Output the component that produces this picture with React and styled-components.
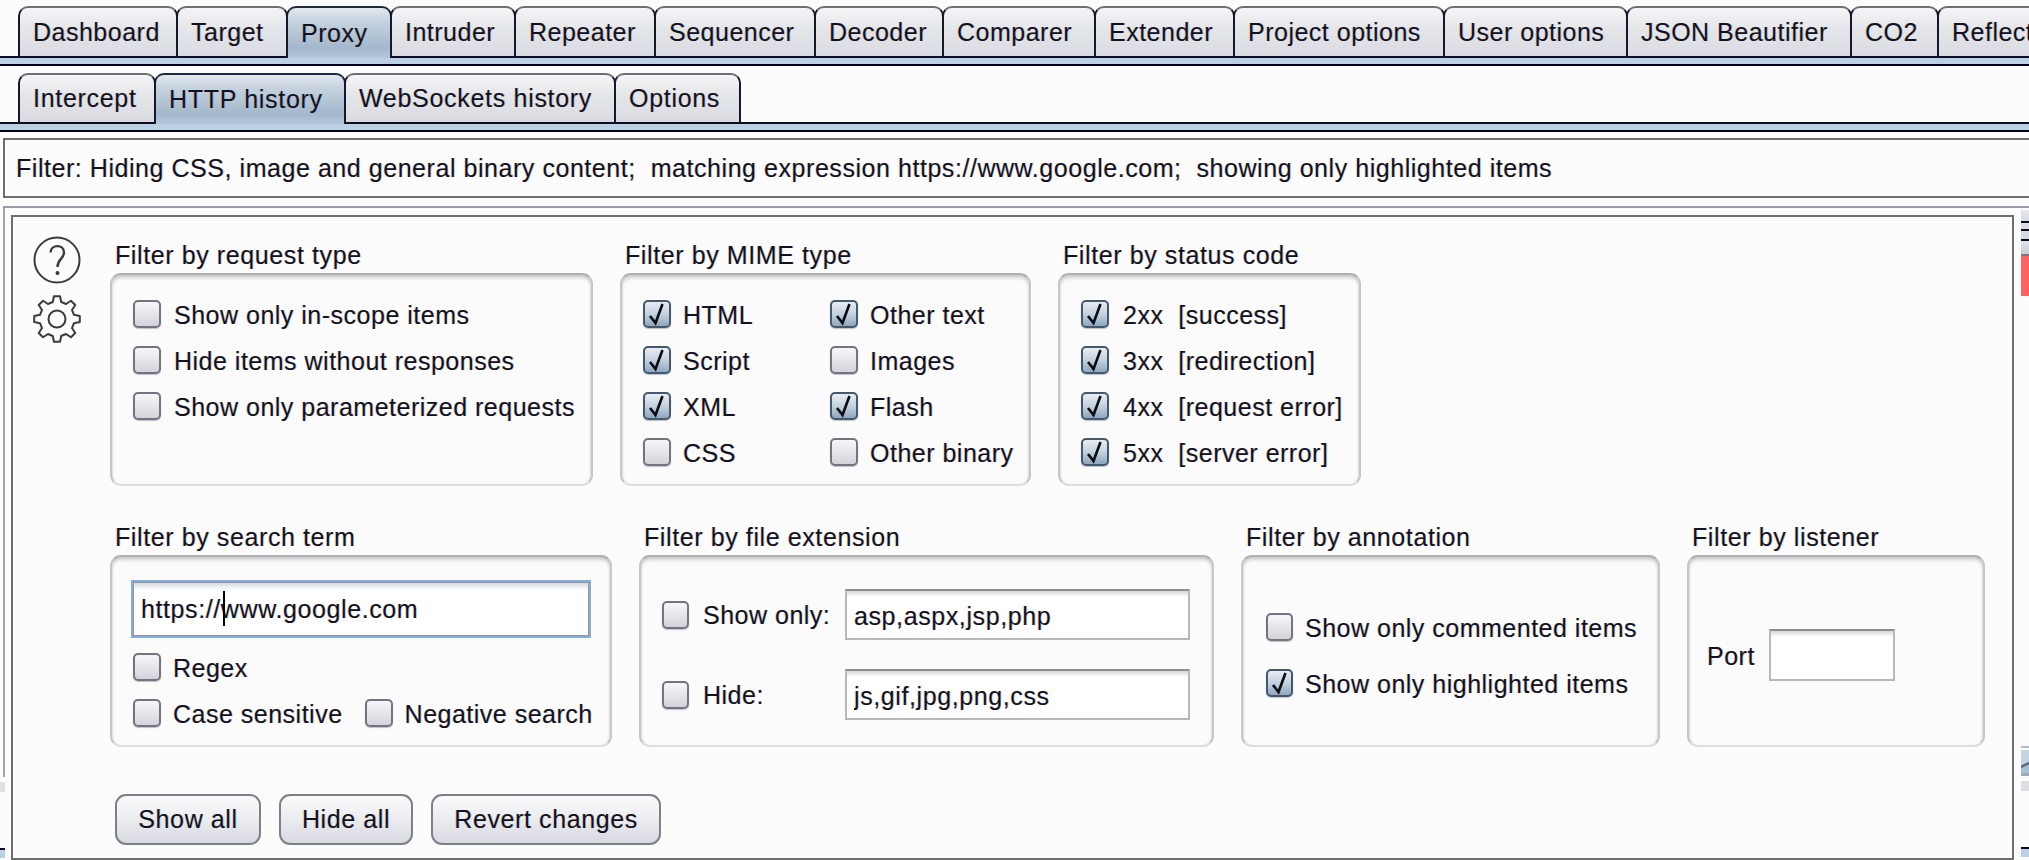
import React from "react";
import styled, { createGlobalStyle, css } from "styled-components";

const Global = createGlobalStyle`
  html, body { margin: 0; padding: 0; background: #fcfcfc; overflow: hidden; }
  body { width: 2029px; height: 860px; font-family: "Liberation Sans", Arial, sans-serif; color: #14101f; }
  * { box-sizing: border-box; }
`;

const fringe = css`
  text-shadow: -0.7px 0 rgba(255, 150, 0, 0.3), 0.7px 0 rgba(0, 130, 255, 0.3);
`;

const Page = styled.div`
  width: 2029px;
  height: 860px;
  overflow: hidden;
  display: flex;
  flex-direction: column;
  font-size: 25px;
  letter-spacing: 0.5px;
  ${fringe}
`;

const TabRow = styled.div`
  display: flex;
  margin-top: ${(p) => p.$top}px;
  height: ${(p) => p.$height}px;
  padding-left: 18px;
  background: linear-gradient(#0b0b24, #0b0b24) bottom / 100% 2px no-repeat;
  letter-spacing: ${(p) => p.$spacing}px;
`;

const Tab = styled.div`
  flex: none;
  width: ${(p) => p.$width}px;
  margin-right: -2px;
  padding-left: 13px;
  display: flex;
  align-items: center;
  border: 2px solid #14182c;
  border-top-color: ${(p) => (p.$active ? "#1c2a3e" : "#6e6e76")};
  border-bottom: ${(p) => (p.$active ? "none" : "2px solid #0b0b24")};
  border-radius: 10px 10px 0 0;
  background: ${(p) =>
    p.$active
      ? "linear-gradient(#e4e9ee 0, #c6d3df 25%, #a3b8cc 80%, #b4c8dc 100%)"
      : "linear-gradient(#f5f5f7 0, #e6e7ea 40%, #d9dbe1 100%)"};
`;

const Band = styled.div`
  height: 8px;
  background: #bcd0e4;
  border-bottom: 2px solid #00001e;
`;

const FilterBar = styled.div`
  margin: 6px 0 8px 3px;
  height: 60px;
  padding-left: 11px;
  display: flex;
  align-items: center;
  white-space: pre;
  letter-spacing: 0.55px;
  border: 2px solid #6e6e6e;
  border-right: none;
`;

const TopLine = styled.div`
  height: 2px;
  margin-left: 3px;
  background: #9a9ca8;
`;

const PanelRow = styled.div`
  flex: 1;
  display: flex;
  min-height: 0;
`;

const LeftGutter = styled.div`
  flex: none;
  width: 11px;
  display: flex;
  flex-direction: column;
`;

const OuterLine = styled.div`
  height: 569px;
  width: 2px;
  margin-left: 3px;
  background: #a4a6b0;
`;

const Strip = styled.div`
  flex: none;
  width: 8px;
  margin-left: 7px;
  display: flex;
  flex-direction: column;
`;

const StripPart = styled.div`
  flex: none;
  height: ${(p) => p.$h}px;
  width: ${(p) => p.$w || "100%"};
  background: ${(p) => p.$c || "transparent"};
`;

const Inner = styled.div`
  flex: none;
  width: 2003px;
  margin-top: 7px;
  border: 2px solid #6e6e6e;
  display: flex;
`;

const IconCol = styled.div`
  flex: none;
  width: 97px;
  padding: 19px 0 0 20px;
  display: flex;
  flex-direction: column;
  gap: 11px;
`;

const Content = styled.div`
  flex: 1;
  display: flex;
  flex-direction: column;
  padding-top: 28px;
`;

const GroupRow = styled.div`
  display: flex;
  gap: 27px;
  margin-bottom: 41px;
`;

const Group = styled.div`
  flex: none;
  width: ${(p) => p.$width}px;
`;

const Title = styled.div`
  height: 28px;
  line-height: 20px;
  padding-left: 5px;
  white-space: pre;
  letter-spacing: 0.6px;
`;

const Box = styled.div`
  height: ${(p) => p.$height}px;
  padding: ${(p) => p.$pad};
  border: 2px solid #c6c6c8;
  border-top-color: #b0b0b2;
  border-bottom-color: #dedee0;
  border-radius: 11px;
  background: #fbfbfb;
  box-shadow: inset 0 4px 4px -2px #bcbcbe, inset 2px 0 2px -1px #e4e4e6, inset -2px 0 2px -1px #e4e4e6;
`;

const Stack = styled.div`
  display: flex;
  flex-direction: column;
  gap: ${(p) => p.$gap || 18}px;
  margin-left: ${(p) => p.$indent || 0}px;
`;

const MimeGrid = styled.div`
  display: grid;
  grid-template-columns: 187px 1fr;
  row-gap: 18px;
`;

const CheckRow = styled.div`
  display: flex;
  align-items: center;
  height: 28px;
  gap: ${(p) => p.$gap || 13}px;
  white-space: pre;
`;

const CheckText = styled.span`
  padding-top: 2px;
`;

const CheckBox = styled.div`
  flex: none;
  width: ${(p) => p.$size || 28}px;
  height: 28px;
  border: 2px solid ${(p) => (p.$on ? "#46586c" : "#727480")};
  border-radius: 5px;
  display: flex;
  align-items: center;
  justify-content: center;
  background: ${(p) =>
    p.$on
      ? "linear-gradient(#e8edf2 0, #c4d2df 50%, #8ea8c0 100%)"
      : "linear-gradient(#f6f6f8 0, #e8e8ec 45%, #d2d4da 100%)"};
  box-shadow: 0 1px 1px rgba(90, 90, 100, 0.35);
`;

const Field = styled.input`
  display: block;
  width: ${(p) => p.$width}px;
  height: ${(p) => p.$height}px;
  padding: 3px 0 0 7px;
  border: 2px solid #b8b8b8;
  border-top-color: #8c8c8c;
  background: linear-gradient(#d8d8d8 0, #ffffff 6px);
  font: inherit;
  color: inherit;
  letter-spacing: 0.6px;
  text-shadow: inherit;
  outline: none;
  border-radius: 0;
`;

const SearchWrap = styled.div`
  position: relative;
  width: 460px;
  margin: 0 0 15px 1px;
`;

const SearchField = styled(Field)`
  width: 100%;
  height: 58px;
  padding: 0 0 0 8px;
  border: 2px solid #86add6;
  box-shadow: inset 0 0 0 1px #8c98a4;
  background: linear-gradient(#cfd4d8 0, #ffffff 8px);
`;

const Caret = styled.div`
  position: absolute;
  left: 92px;
  top: 11px;
  width: 2px;
  height: 35px;
  background: #000;
`;

const ExtRow = styled.div`
  display: flex;
  align-items: center;
`;

const ExtLabel = styled(CheckRow)`
  width: 183px;
  flex: none;
`;

const SearchOptions = styled.div`
  display: flex;
  gap: 22px;
`;

const PortRow = styled.div`
  display: flex;
  align-items: center;
  gap: 14px;
`;

const PortLabel = styled.span`
  padding-top: 2px;
`;

const Buttons = styled.div`
  display: flex;
  margin: 6px 0 0 5px;
`;

const Btn = styled.button`
  flex: none;
  width: ${(p) => p.$width}px;
  height: 51px;
  margin-right: ${(p) => p.$after || 0}px;
  border: 2px solid #7e8088;
  border-radius: 11px;
  background: linear-gradient(#fafafb 0, #eceef1 45%, #d6d9e0 100%);
  font: inherit;
  color: inherit;
  letter-spacing: 0.6px;
  text-shadow: inherit;
  padding: 0;
`;

const Check = ({ on, size }) => (
  <CheckBox $on={on} $size={size}>
    {on && (
      <svg width="20" height="24" viewBox="0 0 20 24" fill="none">
        <path d="M3 14 L8.5 21 L15.5 2" stroke="#0c0c14" strokeWidth="2.6" />
      </svg>
    )}
  </CheckBox>
);

const Item = ({ on, size, gap, children }) => (
  <CheckRow $gap={gap}>
    <Check on={on} size={size} />
    <CheckText>{children}</CheckText>
  </CheckRow>
);

const HelpIcon = () => (
  <svg width="48" height="48" viewBox="0 0 48 48" fill="none">
    <circle cx="24" cy="24" r="22.5" stroke="#3c3c3c" strokeWidth="2" />
    <path d="M17.5 16.5 C18 8 31 8 31 16.5 C31 22.5 24.5 23 24.5 31" stroke="#3c3c3c" strokeWidth="2.4" />
    <circle cx="24.5" cy="37" r="2" fill="#3c3c3c" />
  </svg>
);

const gearPath = () => {
  const teeth = 8;
  const pts = [];
  const R = 23;
  const r = 17.5;
  for (let i = 0; i < teeth; i++) {
    const a = (i * 2 * Math.PI) / teeth - Math.PI / 2;
    const s = Math.PI / teeth;
    [[r, -s * 0.62], [R, -s * 0.34], [R, s * 0.34], [r, s * 0.62]].forEach(([rad, d]) => {
      pts.push(`${(24 + rad * Math.cos(a + d)).toFixed(2)} ${(24 + rad * Math.sin(a + d)).toFixed(2)}`);
    });
  }
  return "M" + pts.join(" L") + " Z";
};

const GearIcon = () => (
  <svg width="48" height="48" viewBox="0 0 48 48" fill="none">
    <path d={gearPath()} stroke="#3c3c3c" strokeWidth="2" strokeLinejoin="round" />
    <circle cx="24" cy="24" r="8.5" stroke="#3c3c3c" strokeWidth="2" />
  </svg>
);

const mainTabs = [
  ["Dashboard", 160], ["Target", 112], ["Proxy", 106, true], ["Intruder", 126], ["Repeater", 142],
  ["Sequencer", 162], ["Decoder", 130], ["Comparer", 154], ["Extender", 141], ["Project options", 212],
  ["User options", 185], ["JSON Beautifier", 226], ["CO2", 89], ["Reflector", 160],
];
const subTabs = [
  ["Intercept", 138], ["HTTP history", 192, true], ["WebSockets history", 272], ["Options", 127],
];

const StripThumbBottom = styled.div`
  flex: none;
  height: 23px;
  background: linear-gradient(155deg, #c2d4e4 0 55%, #5a6c80 60% 66%, #a8c0d6 70%);
`;

export default function App() {
  return (
    <Page>
      <Global />
      <TabRow $top={6} $height={52} $spacing={0.5}>
        {mainTabs.map(([t, w, a]) => (
          <Tab key={t} $width={w} $active={a}>{t}</Tab>
        ))}
      </TabRow>
      <Band />
      <TabRow $top={7} $height={51} $spacing={0.7}>
        {subTabs.map(([t, w, a]) => (
          <Tab key={t} $width={w} $active={a}>{t}</Tab>
        ))}
      </TabRow>
      <Band />
      <FilterBar>
        Filter: Hiding CSS, image and general binary content;  matching expression https://www.google.com;  showing only highlighted items
      </FilterBar>
      <TopLine />
      <PanelRow>
        <LeftGutter>
          <OuterLine />
          <StripPart $h={5} />
          <StripPart $h={10} $c="#e0e1e6" $w="5px" />
          <StripPart $h={56} />
          <StripPart $h={2} $c="#0b0b24" $w="5px" />
          <StripPart $h={8} $c="#bcd0e4" $w="5px" />
        </LeftGutter>
        <Inner>
          <IconCol>
            <HelpIcon />
            <GearIcon />
          </IconCol>
          <Content>
            <GroupRow>
              <Group $width={483}>
                <Title>Filter by request type</Title>
                <Box $height={213} $pad="25px 0 0 21px">
                  <Stack>
                    <Item>Show only in-scope items</Item>
                    <Item>Hide items without responses</Item>
                    <Item>Show only parameterized requests</Item>
                  </Stack>
                </Box>
              </Group>
              <Group $width={411}>
                <Title>Filter by MIME type</Title>
                <Box $height={213} $pad="25px 0 0 21px">
                  <MimeGrid>
                    <Item on gap={12}>HTML</Item>
                    <Item on gap={12}>Other text</Item>
                    <Item on gap={12}>Script</Item>
                    <Item gap={12}>Images</Item>
                    <Item on gap={12}>XML</Item>
                    <Item on gap={12}>Flash</Item>
                    <Item gap={12}>CSS</Item>
                    <Item gap={12}>Other binary</Item>
                  </MimeGrid>
                </Box>
              </Group>
              <Group $width={303}>
                <Title>Filter by status code</Title>
                <Box $height={213} $pad="25px 0 0 21px">
                  <Stack>
                    <Item on gap={14}>2xx  [success]</Item>
                    <Item on gap={14}>3xx  [redirection]</Item>
                    <Item on gap={14}>4xx  [request error]</Item>
                    <Item on gap={14}>5xx  [server error]</Item>
                  </Stack>
                </Box>
              </Group>
            </GroupRow>
            <GroupRow>
              <Group $width={502}>
                <Title>Filter by search term</Title>
                <Box $height={192} $pad="23px 0 0 18px">
                  <SearchWrap>
                    <SearchField readOnly value="https://www.google.com" />
                    <Caret />
                  </SearchWrap>
                  <Stack $indent={3}>
                    <Item gap={12}>Regex</Item>
                    <SearchOptions>
                      <Item gap={12}>Case sensitive</Item>
                      <Item gap={12}>Negative search</Item>
                    </SearchOptions>
                  </Stack>
                </Box>
              </Group>
              <Group $width={575}>
                <Title>Filter by file extension</Title>
                <Box $height={192} $pad="32px 0 0 21px">
                  <Stack $gap={29}>
                    <ExtRow>
                      <ExtLabel $gap={14}>
                        <Check size={27} />
                        <CheckText>Show only:</CheckText>
                      </ExtLabel>
                      <Field readOnly value="asp,aspx,jsp,php" $width={345} $height={51} />
                    </ExtRow>
                    <ExtRow>
                      <ExtLabel $gap={14}>
                        <Check size={27} />
                        <CheckText>Hide:</CheckText>
                      </ExtLabel>
                      <Field readOnly value="js,gif,jpg,png,css" $width={345} $height={51} />
                    </ExtRow>
                  </Stack>
                </Box>
              </Group>
              <Group $width={419}>
                <Title>Filter by annotation</Title>
                <Box $height={192} $pad="56px 0 0 23px">
                  <Stack $gap={28}>
                    <Item size={27} gap={12}>Show only commented items</Item>
                    <Item on size={27} gap={12}>Show only highlighted items</Item>
                  </Stack>
                </Box>
              </Group>
              <Group $width={298}>
                <Title>Filter by listener</Title>
                <Box $height={192} $pad="72px 0 0 18px">
                  <PortRow>
                    <PortLabel>Port</PortLabel>
                    <Field readOnly value="" $width={126} $height={52} />
                  </PortRow>
                </Box>
              </Group>
            </GroupRow>
            <Buttons>
              <Btn $width={146} $after={18}>Show all</Btn>
              <Btn $width={134} $after={18}>Hide all</Btn>
              <Btn $width={230}>Revert changes</Btn>
            </Buttons>
          </Content>
        </Inner>
        <Strip>
          <StripPart $h={2} />
          <StripPart $h={11} $c="linear-gradient(#e6e8ee, #d8dbe2)" />
          <StripPart $h={2} $c="#0b0b24" />
          <StripPart $h={6} $c="#dcdee4" />
          <StripPart $h={2} $c="#0b0b24" />
          <StripPart $h={8} $c="#d8dae2" />
          <StripPart $h={2} $c="#0b0b24" />
          <StripPart $h={13} $c="linear-gradient(#e2e4ea, #c8ccd6)" />
          <StripPart $h={2} $c="#7a7c84" />
          <StripPart $h={40} $c="#ff6060" />
          <StripPart $h={450} />
          <StripPart $h={2} $c="#b4b8c4" />
          <StripPart $h={2} />
          <StripThumbBottom />
          <StripPart $h={3} $c="#a4a8b4" />
          <StripPart $h={5} />
          <StripPart $h={10} $c="#dcdee4" />
          <StripPart $h={56} />
          <StripPart $h={2} $c="#0b0b24" />
          <StripPart $h={8} $c="#bcd0e4" />
        </Strip>
      </PanelRow>
    </Page>
  );
}
